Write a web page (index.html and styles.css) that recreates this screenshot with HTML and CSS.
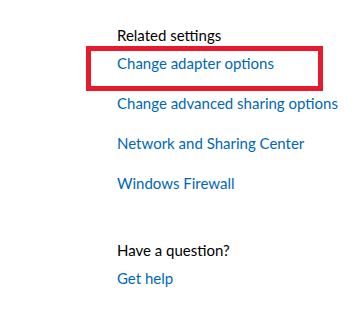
FILE: index.html
```html
<!DOCTYPE html>
<html lang="en">
<head>
  <meta charset="UTF-8">
  <title>Related settings</title>
  <link rel="stylesheet" href="styles.css">
</head>
<body>
  <div class="panel">
    <h3 class="heading">Related settings</h3>
    <ul class="links">
      <li class="marked"><a href="#">Change adapter options</a></li>
      <li><a href="#">Change advanced sharing options</a></li>
      <li><a href="#">Network and Sharing Center</a></li>
      <li><a href="#">Windows Firewall</a></li>
    </ul>

    <h3 class="heading question">Have a question?</h3>
    <ul class="links">
      <li><a href="#">Get help</a></li>
    </ul>
  </div>
</body>
</html>
```

FILE: styles.css
```css
body {
  margin: 0;
  padding: 0;
  background: #fff;
  font-family: Lato, "Liberation Sans", sans-serif;
  font-size: 15px;
}

.panel {
  padding: 24px 0 0 117px;
  white-space: nowrap;
}

.heading {
  margin: 0;
  font-size: 15px;
  font-weight: normal;
  color: #000;
  line-height: 22px;
}

.question {
  margin-top: 45px;
}

.links {
  list-style: none;
  margin: 0;
  padding: 0;
}

.links li {
  position: relative;
  line-height: 22px;
  margin-top: 18px;
}

.links li:first-child {
  margin-top: 6px;
}

.links a {
  color: #0067b8;
  text-decoration: none;
}

/* red highlight around the first link */
.marked::before {
  content: "";
  position: absolute;
  left: -31px;
  top: -6px;
  width: 227px;
  height: 35px;
  border: 5px solid #e8192c;
}
```
